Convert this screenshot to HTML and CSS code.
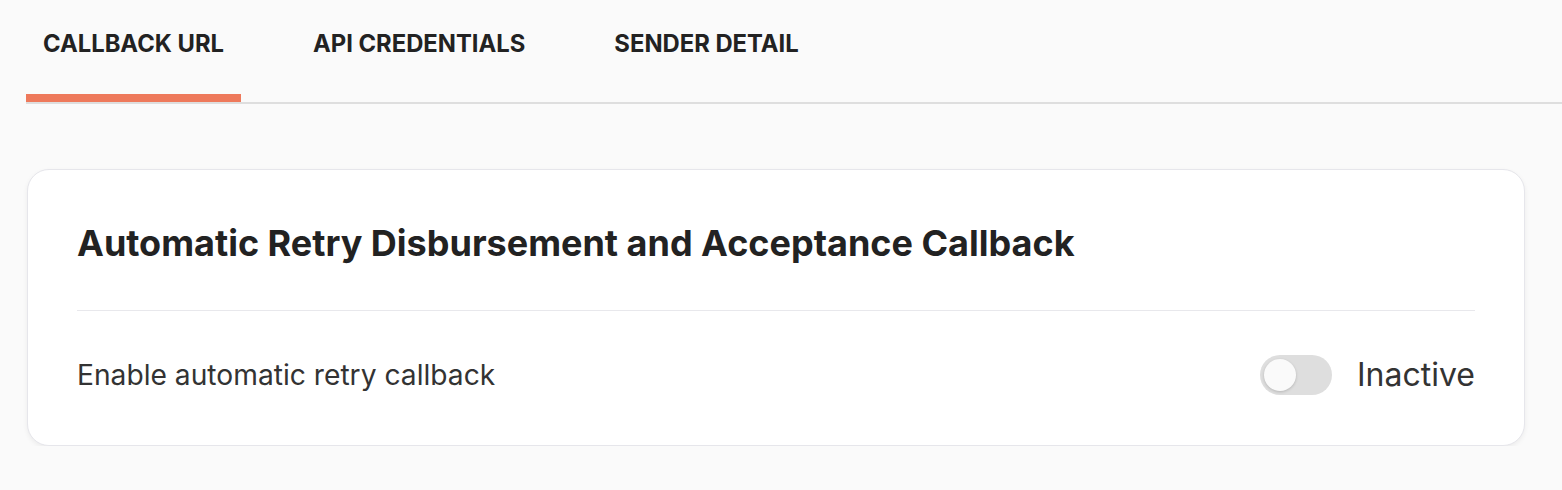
FILE: index.html
```html
<!DOCTYPE html>
<html lang="en">
<head>
<meta charset="utf-8">
<title>Callback settings</title>
<link rel="stylesheet" href="styles.css">
</head>
<body>
<div class="page">
  <nav class="tabs">
    <div class="tab active">CALLBACK URL</div>
    <div class="tab">API CREDENTIALS</div>
    <div class="tab">SENDER DETAIL</div>
  </nav>
  <section class="card">
    <div class="card-head">
      <h2 class="card-title">Automatic Retry Disbursement and Acceptance Callback</h2>
    </div>
    <div class="card-row">
      <span class="row-label">Enable automatic retry callback</span>
      <div class="switch-wrap">
        <span class="switch"><span class="knob"></span></span>
        <span class="switch-text">Inactive</span>
      </div>
    </div>
  </section>
</div>
</body>
</html>
```
FILE: styles.css
```css
* { box-sizing: border-box; }
html, body { margin: 0; padding: 0; }
body {
  background: #fafafa;
  font-family: Inter, "Noto Sans", "Liberation Sans", sans-serif;
  color: #222222;
}
.page {
  padding-left: 26px;
}
.tabs {
  display: flex;
  gap: 55px;
  border-bottom: 2px solid #dedede;
}
.tab {
  padding: 30px 17px 36px;
  line-height: 28px;
  font-size: 23.8px;
  font-weight: 700;
  color: #222222;
  border-bottom: 8px solid transparent;
}
.tab.active {
  border-bottom-color: #ee795b;
}
.card {
  margin: 65px 37px 0 1px;
  background: #ffffff;
  border: 1px solid #e6e6eb;
  border-radius: 22px;
  box-shadow: 0 2px 5px rgba(0, 0, 0, 0.06);
  padding: 0 49px;
}
.card-head {
  padding: 53px 0 47px;
  border-bottom: 1px solid #e8e8ec;
}
.card-title {
  margin: 0;
  font-size: 36px;
  line-height: 40px;
  font-weight: 700;
  color: #222222;
}
.card-row {
  display: flex;
  align-items: center;
  justify-content: space-between;
  padding: 44px 0 50px;
}
.row-label {
  font-size: 28.2px;
  line-height: 40px;
  color: #333333;
}
.switch-wrap {
  display: flex;
  align-items: center;
  gap: 25px;
}
.switch {
  display: flex;
  align-items: center;
  width: 72px;
  height: 40px;
  border-radius: 20px;
  background: #dedede;
  padding: 0 4px;
}
.knob {
  width: 32px;
  height: 32px;
  border-radius: 50%;
  background: #fafafa;
  box-shadow: 0 1px 3px rgba(0, 0, 0, 0.18);
}
.switch-text {
  font-size: 32px;
  line-height: 40px;
  color: #333333;
}
```
